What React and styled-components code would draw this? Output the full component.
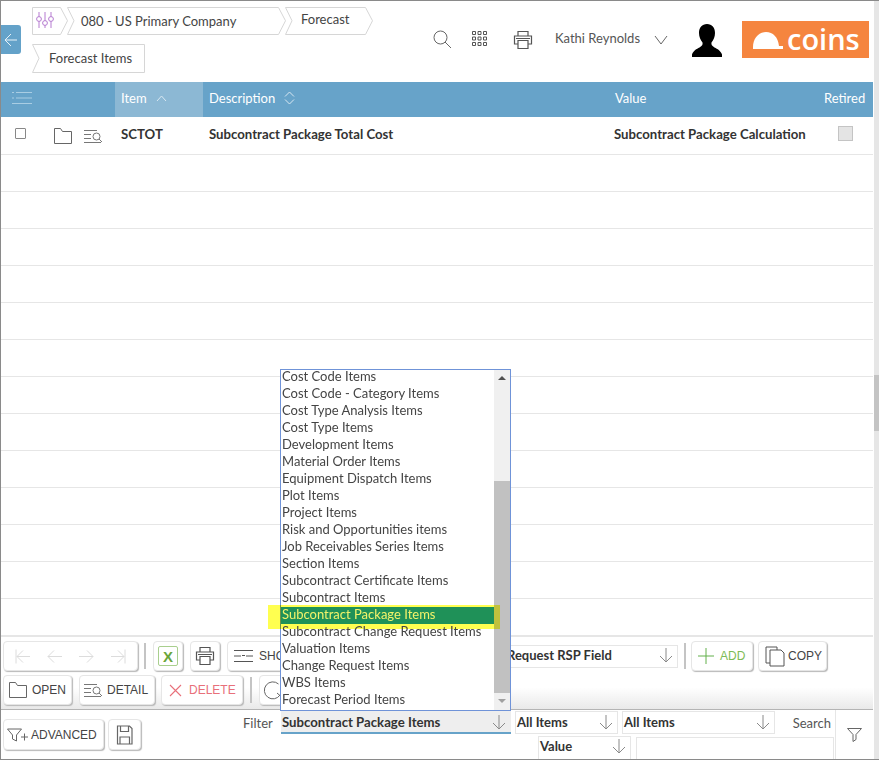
import React from 'react'
import styled, { createGlobalStyle } from 'styled-components'

const GlobalStyle = createGlobalStyle`
  html, body { margin: 0; padding: 0; background: #fff; }
  body { font-family: "Lato", "Liberation Sans", sans-serif; color: #333; }
`

const listItems = [
  'Cost Code Items', 'Cost Code - Category Items', 'Cost Type Analysis Items', 'Cost Type Items',
  'Development Items', 'Material Order Items', 'Equipment Dispatch Items', 'Plot Items', 'Project Items',
  'Risk and Opportunities items', 'Job Receivables Series Items', 'Section Items', 'Subcontract Certificate Items',
  'Subcontract Items', 'Subcontract Package Items', 'Subcontract Change Request Items', 'Valuation Items',
  'Change Request Items', 'WBS Items', 'Forecast Period Items',
]

const Icon = ({ size = 20, w, h, vb, color = '#555', sw = 1, children }) => (
  <svg width={w || size} height={h || size} viewBox={vb || '0 0 20 20'} fill="none" stroke={color} strokeWidth={sw}>
    {children}
  </svg>
)

const ArrowDown = ({ size = 16, color = '#8a8a8a' }) => (
  <Icon size={size} vb="0 0 16 16" color={color}>
    <path d="M8 1v14M2 9l6 6 6-6" />
  </Icon>
)

const FolderIcon = ({ color = '#666' }) => (
  <Icon w={20} h={18} vb="0 0 20 18" color={color}>
    <path d="M1.5 16.5V1.5h6l2 3h9v12z" />
  </Icon>
)

const DetailIcon = ({ color = '#777' }) => (
  <Icon w={19} h={15} vb="0 0 19 15" color={color}>
    <path d="M0 1.5h13M0 5.5h7M0 9.5h7M0 13.5h17" />
    <circle cx="12.5" cy="7.5" r="3.5" />
    <path d="M15 10l3 3" />
  </Icon>
)

const PrintIcon = () => (
  <Icon w={20} h={20} vb="0 0 20 20" color="#555" sw={1.2}>
    <path d="M5 6V1.5h10V6M5 14H1.5V6h17v8H15" />
    <path d="M5 10.5h10v8H5zM3 8.5h14" />
  </Icon>
)

const CrumbBox = styled.div`
  position: relative;
  display: flex;
  align-items: center;
  box-sizing: border-box;
  flex: none;
  width: ${(p) => p.$width}px;
  height: ${(p) => p.$height}px;
  padding-left: ${(p) => p.$pad}px;
  font-size: 13px;
  color: #444;
  svg.outline { position: absolute; left: 0; top: 0; }
  span { position: relative; }
`

const Crumb = ({ width, height = 28, notch = 7, tip = 7, pad = 14, children }) => {
  const w = width - 0.5
  const h = height - 0.5
  const m = h / 2
  const right = tip ? `L${w - tip} .5 L${w} ${m} L${w - tip} ${h}` : `L${w} .5 L${w} ${h}`
  const left = notch ? `L.5 ${h} L${notch} ${m} Z` : `L.5 ${h} Z`
  return (
    <CrumbBox $width={width} $height={height} $pad={pad}>
      <svg className="outline" width={width} height={height} fill="#fff" stroke="#d6d6d6">
        <path d={`M.5 .5 ${right} ${left}`} />
      </svg>
      {children}
    </CrumbBox>
  )
}

const Page = styled.div`
  position: relative;
  width: 879px;
  height: 760px;
  box-sizing: border-box;
  border-top: 1px solid #8a8a8a;
  border-left: 1px solid #8a8a8a;
  overflow: hidden;
  background: #fff;
`

const Bottom = styled.div`
  position: absolute;
  left: 0;
  right: 0;
  bottom: 0;
  height: 1px;
  background: #8a8a8a;
  z-index: 6;
`

const PageScroll = styled.div`
  position: absolute;
  top: 0;
  right: 0;
  bottom: 0;
  width: 5px;
  background: #e6e6e6;
  &::after {
    content: '';
    position: absolute;
    left: 0;
    right: 0;
    top: 374px;
    height: 56px;
    background: #c4c4c4;
  }
`

const Main = styled.div`
  width: 872px;
`

const Header = styled.header`
  display: flex;
  height: 81px;
`

const BackTab = styled.div`
  flex: none;
  align-self: flex-start;
  display: flex;
  align-items: center;
  justify-content: center;
  width: 20px;
  height: 29px;
  margin-top: 24px;
  background: #64a2c9;
  border-radius: 0 3px 3px 0;
`

const Crumbs = styled.div`
  flex: none;
  width: 350px;
  margin: 6px 0 0 11px;
  display: flex;
  flex-wrap: wrap;
  row-gap: 9px;
  align-content: flex-start;
  > * + * { margin-left: -1px; }
  > *:nth-child(4) { margin-left: 0; }
`

const CrumbGlyph = styled.span`
  display: flex;
`

const CompanyLabel = styled.span`
  margin-right: 14px;
`

const ForecastLabel = styled.span`
  top: -2px;
`

const ItemsLabel = styled.span`
  top: -1px;
`

const HeaderTools = styled.div`
  flex: 1;
  display: flex;
  align-items: flex-start;
  padding-left: 51px;
`

const ToolIcon = styled.div`
  flex: none;
  margin-top: 29px;
  margin-right: ${(p) => p.$gap}px;
  line-height: 0;
`

const UserName = styled.div`
  flex: none;
  margin-top: 29px;
  font-size: 13px;
  color: #555;
  width: 99px;
`

const Chevron = styled.div`
  flex: none;
  margin-top: 34px;
  margin-right: 24px;
  line-height: 0;
`

const Avatar = styled.div`
  flex: none;
  margin-top: 23px;
  margin-right: 20px;
  line-height: 0;
`

const Logo = styled.div`
  flex: none;
  width: 127px;
  height: 37px;
  margin-top: 20px;
  background: #f5853f;
  display: flex;
  align-items: center;
  padding-left: 10px;
  box-sizing: border-box;
  gap: 4px;
  color: #fff;
`

const LogoText = styled.span`
  font-family: "Open Sans", "Liberation Sans", sans-serif;
  font-size: 29px;
  line-height: 37px;
  font-weight: 600;
  margin-top: -3px;
`

const TableHead = styled.div`
  display: grid;
  grid-template-columns: 114px 88px 406px 209px 1fr;
  height: 35px;
  margin-bottom: 1px;
  background: #67a3c9;
  color: #fff;
  font-size: 13px;
`

const HeadCell = styled.div`
  display: flex;
  align-items: center;
  gap: 9px;
  padding-bottom: 3px;
  box-sizing: border-box;
  padding-left: ${(p) => p.$pad ?? 6}px;
  background: ${(p) => (p.$active ? '#8cb8d4' : 'transparent')};
`

const Row = styled.div`
  display: grid;
  grid-template-columns: 114px 88px 406px 209px 1fr;
  height: 37px;
  box-sizing: border-box;
  border-bottom: 1px solid #e6e6e6;
  font-size: 13.2px;
  font-weight: 700;
  color: #333;
`

const Cell = styled.div`
  display: flex;
  align-items: center;
  padding-bottom: 5px;
  padding-left: ${(p) => p.$pad ?? 6}px;
`

const ActionCell = styled(Cell)`
  padding-left: 14px;
  padding-bottom: 0;
`

const Check = styled.div`
  box-sizing: border-box;
  width: 11px;
  height: 11px;
  margin-right: 27px;
  margin-top: -6px;
  border: 1.5px solid #888;
  border-radius: 1px;
`

const FolderWrap = styled.div`
  margin-right: 11px;
  line-height: 0;
`

const RetiredBox = styled.div`
  box-sizing: border-box;
  width: 15px;
  height: 15px;
  margin-left: 14px;
  background: #e4e4e4;
  border: 1px solid #c4c4c4;
`

const Toolbar = styled.div`
  height: 74px;
  box-sizing: border-box;
  padding-top: 4px;
  border-top: 1px solid #e6e6e6;
  background: linear-gradient(#fff 70%, #e9e9e9 100%);
  border-bottom: 1px solid #b4b4b4;
`

const ToolRow = styled.div`
  display: flex;
  align-items: center;
  height: 30px;
  margin-bottom: 4px;
  padding-left: 2px;
`

const Btn = styled.div`
  flex: none;
  box-sizing: border-box;
  display: flex;
  align-items: center;
  justify-content: ${(p) => (p.$center ? 'center' : 'flex-start')};
  gap: ${(p) => p.$gap ?? 4}px;
  width: ${(p) => p.$w}px;
  height: ${(p) => p.$h ?? 30}px;
  margin-right: ${(p) => p.$mr ?? 7}px;
  padding-left: ${(p) => (p.$center ? 0 : p.$pl ?? 6)}px;
  background: #fff;
  border: 1px solid #e6e6e6;
  border-radius: 4px;
  box-shadow: 1px 1px 1px #b8b8b8;
  font-family: "Liberation Sans", Arial, sans-serif;
  font-size: 12px;
  color: ${(p) => p.$color || '#444'};
`

const Sep = styled.div`
  flex: none;
  width: 2px;
  height: 26px;
  margin-right: ${(p) => p.$mr ?? 7}px;
  background: #c4c4c4;
`

const PagerBtn = styled(Btn)`
  justify-content: space-around;
  padding: 0 4px;
`

const ExcelBox = styled.div`
  box-sizing: border-box;
  width: 20px;
  height: 20px;
  display: flex;
  align-items: center;
  justify-content: center;
  border: 1px solid #a9cf8e;
  border-radius: 2px;
  color: #6aa53a;
  font-family: "Liberation Sans", Arial, sans-serif;
  font-weight: 700;
  font-size: 15px;
`

const Select = styled.div`
  flex: none;
  box-sizing: border-box;
  display: flex;
  align-items: center;
  justify-content: space-between;
  width: ${(p) => p.$w}px;
  height: ${(p) => p.$h ?? 23}px;
  padding: 0 3px 2px 1px;
  margin-right: ${(p) => p.$mr ?? 0}px;
  border: 1px solid #e6e6e6;
  font-size: 13px;
  font-weight: 700;
  color: #333;
`

const RspSelect = styled(Select)`
  padding-left: 41px;
`

const ValueSelect = styled(Select)`
  padding-bottom: 4px;
`

const ActiveSelect = styled(Select)`
  border: 0;
  border-bottom: 2px solid #67a3c9;
  background: #eee;
  font-size: 13.2px;
  padding: 0 4px 0 1px;
`

const FilterBar = styled.div`
  display: flex;
  height: 49px;
`

const FilterActions = styled.div`
  flex: none;
  width: 242px;
  display: flex;
  padding: 9px 0 0 2px;
  box-sizing: border-box;
`

const FilterFields = styled.div`
  flex: none;
  width: 592px;
  display: flex;
  flex-direction: column;
  gap: 2px;
  padding-top: 1px;
  box-sizing: border-box;
`

const FieldRow = styled.div`
  display: flex;
  align-items: center;
  padding-left: ${(p) => p.$indent ?? 0}px;
`

const FieldLabel = styled.div`
  flex: none;
  font-size: 13px;
  color: #555;
  width: ${(p) => p.$w}px;
  text-align: ${(p) => p.$align || 'left'};
`

const SearchInput = styled.div`
  flex: none;
  box-sizing: border-box;
  width: 198px;
  height: 23px;
  border: 1px solid #e6e6e6;
`

const FilterToggle = styled.div`
  flex: 1;
  display: flex;
  align-items: center;
  justify-content: center;
  border-left: 1px solid #e6e6e6;
`

const Dropdown = styled.div`
  position: absolute;
  left: 279px;
  top: 368px;
  width: 231px;
  height: 342px;
  box-sizing: border-box;
  background: #fff;
  border: 1px solid #6f93d8;
  z-index: 4;
  display: flex;
`

const ItemList = styled.div`
  flex: 1;
  overflow: hidden;
  position: relative;
  z-index: 2;
`

const ListItem = styled.div`
  position: relative;
  height: 17px;
  line-height: ${(p) => (p.$selected ? 15 : 17)}px;
  top: ${(p) => (p.$selected ? 1 : 0)}px;
  font-size: 13px;
  padding-left: 1px;
  white-space: nowrap;
  color: ${(p) => (p.$selected ? '#f3f36a' : '#444')};
  background: ${(p) => (p.$selected ? '#1f9158' : 'transparent')};
  &:first-child { margin-top: -2px; }
`

const ScrollTrack = styled.div`
  flex: none;
  width: 16px;
  background: #f0f0f0;
  display: flex;
  flex-direction: column;
  align-items: center;
`

const ScrollArrow = styled.div`
  flex: none;
  height: 16px;
  width: 100%;
  display: flex;
  align-items: center;
  justify-content: center;
  &::before {
    content: '';
    border-left: 4px solid transparent;
    border-right: 4px solid transparent;
    ${(p) => (p.$up ? 'border-bottom: 4px solid #505050;' : 'border-top: 4px solid #a0a0a0;')}
  }
`

const ScrollThumb = styled.div`
  width: 100%;
  height: 212px;
  margin-top: 95px;
  background: #c1c1c1;
`

// the yellow marker sits under the list text but over the scrollbar
const Highlight = styled.div`
  position: absolute;
  left: -13px;
  top: 235px;
  width: 232px;
  height: 24px;
  background: #ffff50;
  mix-blend-mode: multiply;
  z-index: 1;
`

export default function App() {
  return (
    <>
      <GlobalStyle />
      <Page>
        <Main>
          <Header>
            <BackTab>
              <Icon size={14} vb="0 0 14 14" color="#e8f2f8">
                <path d="M13 7H1M7 1L1 7l6 6" />
              </Icon>
            </BackTab>
            <Crumbs>
              <Crumb width={36} notch={0} pad={3}>
                <CrumbGlyph>
                  <Icon size={20} color="#b57ad0">
                    <path d="M4 1v16M10 1v16M16 1v16" />
                    <circle cx="4" cy="8" r="2.4" fill="#fff" />
                    <circle cx="10" cy="12" r="2.4" fill="#fff" />
                    <circle cx="16" cy="8" r="2.4" fill="#fff" />
                  </Icon>
                </CrumbGlyph>
              </Crumb>
              <Crumb width={219}>
                <CompanyLabel>080 - US Primary Company</CompanyLabel>
                <ArrowDown size={13} color="#666" />
              </Crumb>
              <Crumb width={88} pad={16}>
                <ForecastLabel>Forecast</ForecastLabel>
              </Crumb>
              <Crumb width={113} height={29} tip={0} pad={17}>
                <ItemsLabel>Forecast Items</ItemsLabel>
              </Crumb>
            </Crumbs>
            <HeaderTools>
              <ToolIcon $gap={19}>
                <Icon size={19} vb="0 0 19 19" color="#666">
                  <circle cx="7.5" cy="7.5" r="6.5" />
                  <path d="M12 12l6 6" />
                </Icon>
              </ToolIcon>
              <ToolIcon $gap={25}>
                <Icon size={17} vb="0 0 17 17" color="#555">
                  <path d="M1.5 1.5h3v3h-3zM7 1.5h3v3H7zM12.5 1.5h3v3h-3zM1.5 7h3v3h-3zM7 7h3v3H7zM12.5 7h3v3h-3zM1.5 12.5h3v3h-3zM7 12.5h3v3H7zM12.5 12.5h3v3h-3z" />
                </Icon>
              </ToolIcon>
              <ToolIcon $gap={22}>
                <PrintIcon />
              </ToolIcon>
              <UserName>Kathi Reynolds</UserName>
              <Chevron>
                <Icon w={14} h={10} vb="0 0 14 10" color="#666">
                  <path d="M1 1l6 8 6-8" />
                </Icon>
              </Chevron>
              <Avatar>
                <svg width="30" height="33" viewBox="0 0 30 33" fill="#000">
                  <path d="M15 0c5 0 8 3.500 8 9 0 4-1.500 7-3.500 9.500-.5 2 .5 3.500 3 5 3 1.500 6 3 7.500 7v2.500H0V30.500c1.500-4 4.500-5.500 7.500-7 2.500-1.500 3.500-3 3-5C8.500 16 7 13 7 9c0-5.500 3-9 8-9z" />
                </svg>
              </Avatar>
              <Logo>
                <svg width="31" height="18" viewBox="0 0 31 18" fill="#fff">
                  <path d="M1 16C1 7 7 1 14 1s12 5 13 14h4v3H1z" />
                </svg>
                <LogoText>coins</LogoText>
              </Logo>
            </HeaderTools>
          </Header>

          <TableHead>
            <HeadCell $pad={11}>
              <Icon w={20} h={14} vb="0 0 20 14" color="#a9cde3">
                <path d="M0 1.500h2M4 1.500h16M0 7h2M4 7h16M0 12.500h20" />
              </Icon>
            </HeadCell>
            <HeadCell $active>
              Item
              <Icon w={11} h={7} vb="0 0 11 7" color="#d8e8f2">
                <path d="M1 6l4.500-5L10 6" />
              </Icon>
            </HeadCell>
            <HeadCell>
              Description
              <Icon w={11} h={14} vb="0 0 11 14" color="#d8e8f2">
                <path d="M1 5.500l4.500-4.500L10 5.500M1 8.500l4.500 4.500L10 8.500" />
              </Icon>
            </HeadCell>
            <HeadCell>Value</HeadCell>
            <HeadCell>Retired</HeadCell>
          </TableHead>

          <Row>
            <ActionCell>
              <Check />
              <FolderWrap>
                <FolderIcon />
              </FolderWrap>
              <DetailIcon />
            </ActionCell>
            <Cell>SCTOT</Cell>
            <Cell>Subcontract Package Total Cost</Cell>
            <Cell $pad={5}>Subcontract Package Calculation</Cell>
            <Cell>
              <RetiredBox />
            </Cell>
          </Row>
          {Array.from({ length: 13 }, (_, i) => (
            <Row key={i} />
          ))}

          <Toolbar>
            <ToolRow>
              <PagerBtn $w={135} $mr={6}>
                {['M2 1v14M16 8H3M9 2L3 8l6 6', 'M16 8H2M8 2L2 8l6 6', 'M1 8h14M9 2l6 6-6 6', 'M15 1v14M1 8h13M8 2l6 6-6 6'].map((d) => (
                  <Icon key={d} size={17} vb="0 0 17 16" color="#dcdcdc">
                    <path d={d} />
                  </Icon>
                ))}
              </PagerBtn>
              <Sep />
              <Btn $w={30} $center>
                <ExcelBox>X</ExcelBox>
              </Btn>
              <Btn $w={30} $center>
                <PrintIcon />
              </Btn>
              <Btn $w={150} $mr={88} $gap={6}>
                <Icon w={19} h={14} vb="0 0 19 14" color="#555">
                  <path d="M0 1.500h19M0 7h7M12 7h7M0 12.500h19M8 6.500h3" />
                </Icon>
                SHO
              </Btn>
              <RspSelect $w={213} $mr={6}>
                Request RSP Field
                <ArrowDown />
              </RspSelect>
              <Sep $mr={5} />
              <Btn $w={62} $color="#7dbb55" $gap={6} $mr={5}>
                <Icon size={16} vb="0 0 16 16" color="#63b04a">
                  <path d="M8 0v16M0 8h16" />
                </Icon>
                ADD
              </Btn>
              <Btn $w={69} $gap={3}>
                <Icon w={20} h={21} vb="0 0 20 21" color="#555">
                  <path d="M5 17H1V1h11v3M5 4h11l3 3v13H5z" />
                </Icon>
                COPY
              </Btn>
            </ToolRow>
            <ToolRow>
              <Btn $w={69} $gap={4} $pl={4}>
                <FolderIcon />
                OPEN
              </Btn>
              <Btn $w={76} $mr={6} $gap={4} $pl={4}>
                <DetailIcon />
                DETAIL
              </Btn>
              <Btn $w={82} $mr={7} $color="#e8707a" $gap={7} $pl={7}>
                <Icon size={13} vb="0 0 13 13" color="#e8707a" sw={1.1}>
                  <path d="M1 1l11 11M12 1L1 12" />
                </Icon>
                DELETE
              </Btn>
              <Sep />
              <Btn $w={60} $pl={3}>
                <Icon size={20} color="#666">
                  <path d="M17 15A8.500 8.500 0 1 1 15.500 4" />
                  <path d="M14 13l3.500 3" />
                </Icon>
              </Btn>
            </ToolRow>
          </Toolbar>

          <FilterBar>
            <FilterActions>
              <Btn $w={101} $h={31} $mr={4} $gap={3} $pl={3}>
                <Icon w={21} h={14} vb="0 0 21 14" color="#666">
                  <path d="M.5 1h14L9.500 7v6l-4-2V7zM14 9h7M17.500 5.500v7" />
                </Icon>
                ADVANCED
              </Btn>
              <Btn $w={33} $h={31} $center>
                <Icon w={17} h={20} vb="0 0 17 20" color="#666" sw={1.2}>
                  <path d="M1.500 1h12l2.500 2.500V19H1.500zM4.500 1v5.500h8V1M4 19v-7h9.500v7" />
                </Icon>
              </Btn>
            </FilterActions>
            <FilterFields>
              <FieldRow>
                <FieldLabel $w={38}>Filter</FieldLabel>
                <ActiveSelect $w={230} $mr={4}>
                  Subcontract Package Items
                  <ArrowDown />
                </ActiveSelect>
                <Select $w={103} $mr={4}>
                  All Items
                  <ArrowDown />
                </Select>
                <Select $w={153}>
                  All Items
                  <ArrowDown />
                </Select>
                <FieldLabel $w={56} $align="right">Search</FieldLabel>
              </FieldRow>
              <FieldRow $indent={295}>
                <ValueSelect $w={93} $mr={5} $h={24}>
                  Value
                  <ArrowDown />
                </ValueSelect>
                <SearchInput />
              </FieldRow>
            </FilterFields>
            <FilterToggle>
              <Icon w={15} h={14} vb="0 0 15 14" color="#666">
                <path d="M.5.500h14L9 6.500v5l-3 2v-7z" />
              </Icon>
            </FilterToggle>
          </FilterBar>
        </Main>

        <Dropdown>
          <Highlight />
          <ItemList>
            {listItems.map((item) => (
              <ListItem key={item} $selected={item === 'Subcontract Package Items'}>
                {item}
              </ListItem>
            ))}
          </ItemList>
          <ScrollTrack>
            <ScrollArrow $up />
            <ScrollThumb />
            <ScrollArrow />
          </ScrollTrack>
        </Dropdown>
        <PageScroll />
        <Bottom />
      </Page>
    </>
  )
}
